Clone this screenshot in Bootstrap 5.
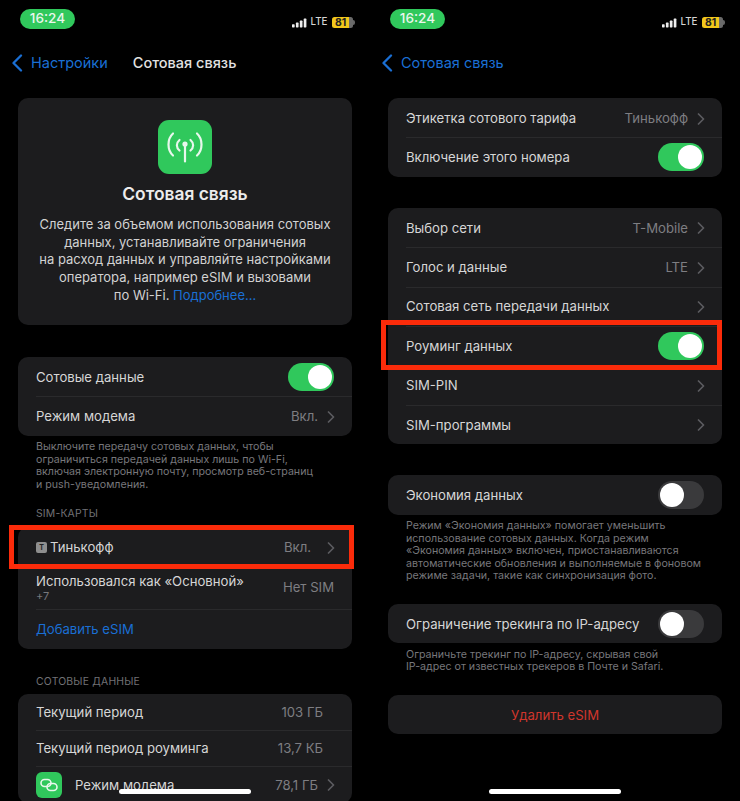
<!DOCTYPE html>
<html lang="ru">
<head>
<meta charset="utf-8">
<title>Сотовая связь</title>
<link href="https://cdn.jsdelivr.net/npm/bootstrap@5.3.0/dist/css/bootstrap.min.css" rel="stylesheet">
<style>
html,body{margin:0;background:#000;}
body{width:740px;height:801px;overflow:hidden;font-family:Inter,"Liberation Sans",sans-serif;color:#dcdcdc;}
.phone{width:370px;height:801px;overflow:hidden;position:relative;background:#000;flex:none;}
.status{height:47px;padding:9px 0 0 20px;}
.pill{width:55px;height:19.5px;border-radius:10px;background:#30c85c;color:#e9f6ec;font-size:13.6px;font-weight:500;line-height:19.5px;text-align:center;}
.right-status{gap:4px;width:63px;margin:4px 15px 0 auto;height:19px;}
.lte{font-size:9.8px;font-weight:500;color:#d5d5d5;}
.batt{width:21px;height:11.5px;background:linear-gradient(90deg,#f2c71b 0 82%,#6a6a6a 82% 100%);border-radius:2.5px;color:#222;font-size:10.4px;font-weight:700;line-height:11.5px;text-align:left;padding-left:3.5px;flex:none;}
.nub{width:2.5px;height:5px;background:#666;border-radius:0 2px 2px 0;margin-left:-4px;flex:none;}
.topnav{height:31px;padding-left:11px;font-size:14.5px;}
.back{color:#1a6fd4;}
.back svg{margin-right:8px;}
.navtitle{color:#e2e2e2;font-weight:500;margin-left:25px;}
.group{background:#1c1c1e;border-radius:10px;margin:0 18px;overflow:hidden;border:0;}
.cell{background:transparent;border:0;height:39.4px;padding:2px 18px 0;color:#d6d6d6;font-size:13.15px;position:relative;display:flex;align-items:center;}
.cell+.cell::before{content:"";position:absolute;left:18px;right:0;top:0;height:1px;background:#2a2a2c;}
.val{margin-left:auto;color:#7e7e82;font-size:13.15px;}
.chev{margin-left:9px;margin-right:-1px;flex:none;}
.chev-gap{margin-left:auto;}
.toggle{width:46px;height:28px;border-radius:14px;margin-left:auto;position:relative;background:#3a3a3c;flex:none;top:-1px;}
.toggle::after{content:"";position:absolute;top:2px;left:2px;width:24px;height:24px;border-radius:50%;background:#fff;}
.toggle.on{background:#30c85c;}
.toggle.on::after{left:20px;}
.hero{height:227px;margin-top:20px;text-align:center;padding-top:22px;}
.appicon{width:54px;height:54px;border-radius:11px;background:#30c85c;margin:0 auto;}
.hero h1{font-size:17.4px;font-weight:600;color:#ececec;margin:10px 0 0;line-height:20px;}
.hero p{font-size:13px;line-height:17.7px;margin:12px 0 0;color:#d2d2d2;}
.blue{color:#1a6fd4;}
.foot{margin:5.5px 0 0 36px;font-size:10.65px;line-height:12.6px;color:#77777b;white-space:nowrap;}
.head{margin:0 36px;font-size:10.4px;line-height:13px;color:#717175;letter-spacing:.2px;}
.head-sim{margin-top:15.3px;margin-bottom:7px;}
.head-data{margin-top:26.6px;margin-bottom:5.6px;}
.sim{width:11px;height:11px;border-radius:2px;background:#8e8e8e;color:#222;font-size:7px;font-weight:700;line-height:11px;text-align:center;margin-right:3px;flex:none;}
.cell.tall{height:43px;padding-top:0;}
.sub{font-size:11px;color:#77777b;line-height:12px;}
.rowtop{line-height:17px;}
.mini{width:26px;height:26px;border-radius:6px;background:#30c85c;margin-right:13px;flex:none;}
.frame{position:absolute;border:5.5px solid #fb2b0a;pointer-events:none;}
.f1{left:9px;top:525px;width:345px;height:44px;}
.f2{left:11px;top:320px;width:341px;height:49.5px;}
.homebar{position:absolute;left:119px;top:789px;width:132px;height:5px;border-radius:3px;background:#fff;}
.red{color:#d0362c;justify-content:center;}
.gap-hero{margin-top:32px;}
.gap-top{margin-top:20px;}
.gap-sec{margin-top:31px;}
.gap-foot{margin-top:21px;}
.cell.data-row{height:36px;}
.cell.data-last{height:37px;}
.val-in{margin-right:11px;}
.val-sim{margin-right:7px;}
.cell.add-link{color:#1a6fd4;}
</style>
</head>
<body>
<div class="d-flex">

<section class="phone">
  <div class="status d-flex align-items-start">
    <div class="pill">16:24</div>
    <div class="right-status d-flex align-items-center">
      <svg width="16.400" height="10" viewBox="0 0 16.400 10"><g fill="#eee"><rect x="0" y="6.500" width="3" height="3.500" rx=".7"/><rect x="4.400" y="4.500" width="3" height="5.500" rx=".7"/><rect x="8.800" y="2.200" width="3" height="7.800" rx=".7"/><rect x="13.200" y="0" width="3" height="10" rx=".7"/></g></svg>
      <span class="lte">LTE</span>
      <span class="batt">81</span><span class="nub"></span>
    </div>
  </div>
  <div class="topnav d-flex align-items-center">
    <span class="back d-flex align-items-center"><svg width="12" height="18" viewBox="0 0 12 18"><path d="M10 1.500 2.500 9l7.500 7.500" fill="none" stroke="#1a6fd4" stroke-width="2.300" stroke-linecap="round" stroke-linejoin="round"/></svg>Настройки</span>
    <span class="navtitle">Сотовая связь</span>
  </div>
  <div class="group hero">
    <div class="appicon d-flex align-items-center justify-content-center">
      <svg width="54" height="54" viewBox="0 0 54 54" fill="none" stroke="#e8f7ec" stroke-linecap="round" stroke-width="2.200"><path d="M15 13.500C9 19 9 30 15 35.500M39 13.500c6 5.500 6 16.500 0 22"/><path d="M21.500 20c-3.500 3-3.500 7.500 0 10.500M32.500 20c3.500 3 3.500 7.500 0 10.500"/><path d="M27 25v16.500"/><circle cx="27" cy="24" r="2.600" fill="#e8f7ec" stroke="none"/></svg>
    </div>
    <h1>Сотовая связь</h1>
    <p>Следите за объемом использования сотовых<br>данных, устанавливайте ограничения<br>на расход данных и управляйте настройками<br>оператора, например eSIM и вызовами<br>по Wi-Fi. <span class="blue">Подробнее…</span></p>
  </div>
  <div class="group list-group gap-hero">
    <div class="cell list-group-item">Сотовые данные<span class="toggle on"></span></div>
    <div class="cell list-group-item">Режим модема<span class="val">Вкл.</span><svg class="chev" width="8" height="12" viewBox="0 0 8 12"><path d="M1.500 1 6.500 6l-5 5" fill="none" stroke="#5c5c60" stroke-width="1.700" stroke-linecap="round" stroke-linejoin="round"/></svg></div>
  </div>
  <p class="foot mb-0">Выключите передачу сотовых данных, чтобы<br>ограничиться передачей данных лишь по Wi-Fi,<br>включая электронную почту, просмотр веб-страниц<br>и push-уведомления.</p>
  <div class="head head-sim">SIM-КАРТЫ</div>
  <div class="group list-group">
    <div class="cell list-group-item"><span class="sim">T</span>Тинькофф<span class="val val-sim">Вкл.</span><svg class="chev" width="8" height="12" viewBox="0 0 8 12"><path d="M1.500 1 6.500 6l-5 5" fill="none" stroke="#5c5c60" stroke-width="1.700" stroke-linecap="round" stroke-linejoin="round"/></svg></div>
    <div class="cell list-group-item tall"><div><div class="rowtop">Использовался как «Основной»</div><div class="sub">+7</div></div><span class="val">Нет SIM</span></div>
    <div class="cell list-group-item add-link">Добавить eSIM</div>
  </div>
  <div class="head head-data">СОТОВЫЕ ДАННЫЕ</div>
  <div class="group list-group">
    <div class="cell list-group-item data-row">Текущий период<span class="val val-in">103 ГБ</span></div>
    <div class="cell list-group-item data-row">Текущий период роуминга<span class="val val-in">13,7 КБ</span></div>
    <div class="cell list-group-item data-last"><span class="mini d-flex align-items-center justify-content-center"><svg width="18" height="14" viewBox="0 0 18 14" fill="none" stroke="#e8f7ec" stroke-width="1.600"><rect x="1" y="1.500" width="10" height="7" rx="3.500"/><rect x="7" y="5.500" width="10" height="7" rx="3.500"/></svg></span>Режим модема<span class="val">78,1 ГБ</span><svg class="chev" width="8" height="12" viewBox="0 0 8 12"><path d="M1.500 1 6.500 6l-5 5" fill="none" stroke="#5c5c60" stroke-width="1.700" stroke-linecap="round" stroke-linejoin="round"/></svg></div>
  </div>
  <div class="frame f1"></div>
  <div class="homebar"></div>
</section>

<section class="phone">
  <div class="status d-flex align-items-start">
    <div class="pill">16:24</div>
    <div class="right-status d-flex align-items-center">
      <svg width="16.400" height="10" viewBox="0 0 16.400 10"><g fill="#eee"><rect x="0" y="6.500" width="3" height="3.500" rx=".7"/><rect x="4.400" y="4.500" width="3" height="5.500" rx=".7"/><rect x="8.800" y="2.200" width="3" height="7.800" rx=".7"/><rect x="13.200" y="0" width="3" height="10" rx=".7"/></g></svg>
      <span class="lte">LTE</span>
      <span class="batt">81</span><span class="nub"></span>
    </div>
  </div>
  <div class="topnav d-flex align-items-center">
    <span class="back d-flex align-items-center"><svg width="12" height="18" viewBox="0 0 12 18"><path d="M10 1.500 2.500 9l7.500 7.500" fill="none" stroke="#1a6fd4" stroke-width="2.300" stroke-linecap="round" stroke-linejoin="round"/></svg>Сотовая связь</span>
  </div>
  <div class="group list-group gap-top">
    <div class="cell list-group-item">Этикетка сотового тарифа<span class="val">Тинькофф</span><svg class="chev" width="8" height="12" viewBox="0 0 8 12"><path d="M1.500 1 6.500 6l-5 5" fill="none" stroke="#5c5c60" stroke-width="1.700" stroke-linecap="round" stroke-linejoin="round"/></svg></div>
    <div class="cell list-group-item">Включение этого номера<span class="toggle on"></span></div>
  </div>
  <div class="group list-group gap-sec">
    <div class="cell list-group-item">Выбор сети<span class="val">T-Mobile</span><svg class="chev" width="8" height="12" viewBox="0 0 8 12"><path d="M1.500 1 6.500 6l-5 5" fill="none" stroke="#5c5c60" stroke-width="1.700" stroke-linecap="round" stroke-linejoin="round"/></svg></div>
    <div class="cell list-group-item">Голос и данные<span class="val">LTE</span><svg class="chev" width="8" height="12" viewBox="0 0 8 12"><path d="M1.500 1 6.500 6l-5 5" fill="none" stroke="#5c5c60" stroke-width="1.700" stroke-linecap="round" stroke-linejoin="round"/></svg></div>
    <div class="cell list-group-item">Сотовая сеть передачи данных<svg class="chev chev-gap" width="8" height="12" viewBox="0 0 8 12"><path d="M1.500 1 6.500 6l-5 5" fill="none" stroke="#5c5c60" stroke-width="1.700" stroke-linecap="round" stroke-linejoin="round"/></svg></div>
    <div class="cell list-group-item">Роуминг данных<span class="toggle on"></span></div>
    <div class="cell list-group-item">SIM-PIN<svg class="chev chev-gap" width="8" height="12" viewBox="0 0 8 12"><path d="M1.500 1 6.500 6l-5 5" fill="none" stroke="#5c5c60" stroke-width="1.700" stroke-linecap="round" stroke-linejoin="round"/></svg></div>
    <div class="cell list-group-item">SIM-программы<svg class="chev chev-gap" width="8" height="12" viewBox="0 0 8 12"><path d="M1.500 1 6.500 6l-5 5" fill="none" stroke="#5c5c60" stroke-width="1.700" stroke-linecap="round" stroke-linejoin="round"/></svg></div>
  </div>
  <div class="group list-group gap-sec">
    <div class="cell list-group-item">Экономия данных<span class="toggle"></span></div>
  </div>
  <p class="foot mb-0">Режим «Экономия данных» помогает уменьшить<br>использование сотовых данных. Когда режим<br>«Экономия данных» включен, приостанавливаются<br>автоматические обновления и выполняемые в фоновом<br>режиме задачи, такие как синхронизация фото.</p>
  <div class="group list-group gap-foot">
    <div class="cell list-group-item">Ограничение трекинга по IP-адресу<span class="toggle"></span></div>
  </div>
  <p class="foot mb-0">Ограничьте трекинг по IP-адресу, скрывая свой<br>IP-адрес от известных трекеров в Почте и Safari.</p>
  <div class="group list-group gap-foot">
    <div class="cell list-group-item red">Удалить eSIM</div>
  </div>
  <div class="frame f2"></div>
  <div class="homebar"></div>
</section>

</div>
<script src="https://cdn.jsdelivr.net/npm/bootstrap@5.3.0/dist/js/bootstrap.bundle.min.js"></script>
</body>
</html>
